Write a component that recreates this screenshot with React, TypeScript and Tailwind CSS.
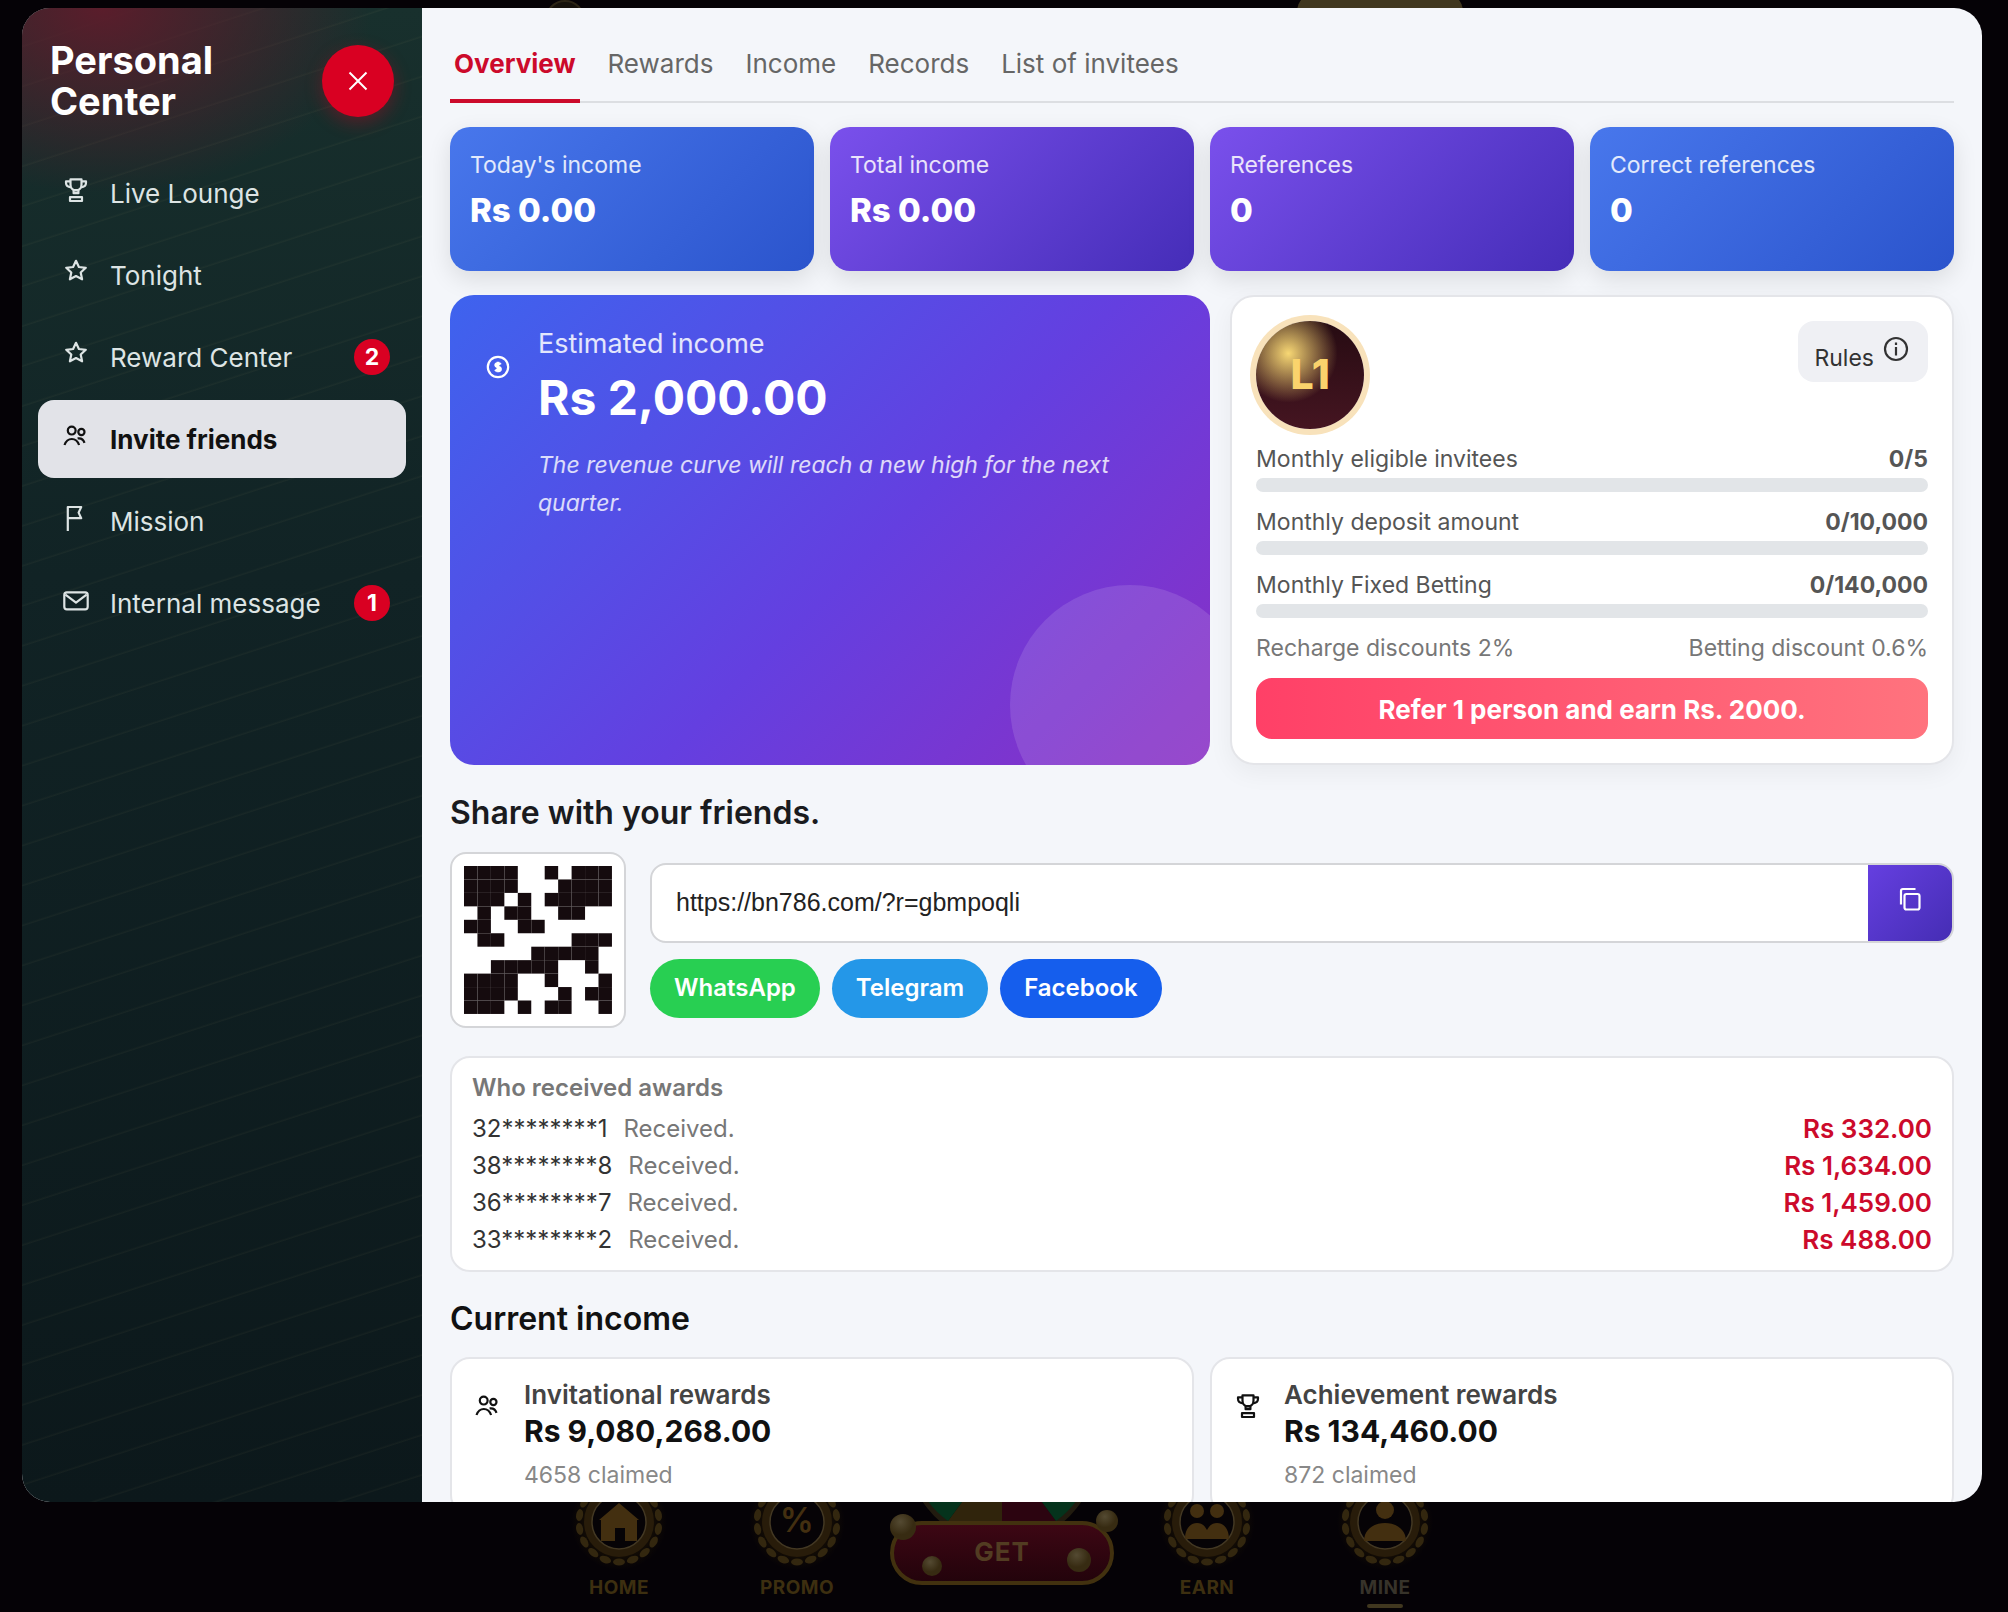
import type { ReactNode } from "react";
import clsx from "clsx";

const navItems = [
  { label: "Live Lounge", icon: "trophy" },
  { label: "Tonight", icon: "star" },
  { label: "Reward Center", icon: "star", badge: 2 },
  { label: "Invite friends", icon: "users", active: true },
  { label: "Mission", icon: "flag" },
  { label: "Internal message", icon: "mail", badge: 1 },
];

const tabs = ["Overview", "Rewards", "Income", "Records", "List of invitees"];

const stats = [
  { label: "Today's income", value: "Rs 0.00", tone: "blue" },
  { label: "Total income", value: "Rs 0.00", tone: "violet" },
  { label: "References", value: "0", tone: "violet" },
  { label: "Correct references", value: "0", tone: "blue" },
];

const goals = [
  { label: "Monthly eligible invitees", done: 0, total: 5 },
  { label: "Monthly deposit amount", done: 0, total: 10000 },
  { label: "Monthly Fixed Betting", done: 0, total: 140000 },
];

const awards = [
  { user: "32********1", amount: "Rs 332.00" },
  { user: "38********8", amount: "Rs 1,634.00" },
  { user: "36********7", amount: "Rs 1,459.00" },
  { user: "33********2", amount: "Rs 488.00" },
];

const income = [
  {
    title: "Invitational rewards",
    value: "Rs 9,080,268.00",
    claimed: "4658 claimed",
    icon: "users",
  },
  {
    title: "Achievement rewards",
    value: "Rs 134,460.00",
    claimed: "872 claimed",
    icon: "trophy",
  },
];

const qrRows = [
  "11110010111",
  "11110001111",
  "11101011111",
  "01011001100",
  "11001100000",
  "01100000111",
  "00000111110",
  "00111110010",
  "11110010001",
  "11110001011",
  "11101011001",
];

const iconShapes: Record<string, ReactNode> = {
  trophy: (
    <>
      <path d="M10.5 2.3h11v5.2c0 3.4-2.2 5.8-5.5 5.8s-5.5-2.4-5.5-5.8z" />
      <path d="M10.5 4.4H6v1.4c0 2.6 2 4.3 5 4.5M21.5 4.4H26v1.4c0 2.6-2 4.3-5 4.5" />
      <path d="M13.6 13.2h4.8v3h-4.8zM10 20.2h12v3.8H10z" />
    </>
  ),
  star: (
    <path d="M16 1.8l2.9 6.2 6.9.8-5.1 4.7 1.4 6.8-6.1-3.3-6.1 3.3 1.4-6.8-5.1-4.7 6.9-.8z" />
  ),
  users: (
    <>
      <circle cx="11.7" cy="7.6" r="3.9" />
      <circle cx="21.4" cy="9" r="3.1" />
      <path d="M4.5 22c1.4-4 3.9-6 7.3-6s5.9 2 7.3 6" />
      <path d="M17.6 15.4c3.4-.5 5.8 1 6.9 4.4" />
    </>
  ),
  flag: <path d="M7.8 26V2h13.4l-2.6 5.6 2.6 5.6H7.8" />,
  mail: (
    <>
      <rect x="4.3" y="5.3" width="23.4" height="17" rx="2.6" />
      <path d="M5.4 7.6L16 15.6l10.6-8" />
    </>
  ),
};

function Icon({ name }: { name: string }) {
  return (
    <svg
      viewBox="0 0 32 32"
      className="h-8 w-8 shrink-0"
      fill="none"
      stroke="currentColor"
      strokeWidth="2.2"
      strokeLinejoin="round"
      aria-hidden="true"
    >
      {iconShapes[name]}
    </svg>
  );
}

function Sidebar() {
  return (
    <aside className="w-[400px] shrink-0 bg-[radial-gradient(270px_185px_at_20%_0%,#5a1d2b_0%,#5a1d2b00_100%),repeating-linear-gradient(162deg,#ffe08c00_0px,#ffe08c00_35px,#ffe08c0a_37px,#ffe08c00_38px),linear-gradient(180deg,#18302d_0%,#112325_38%,#0c181b_100%)] px-4 pt-8">
      <div className="flex items-center justify-between px-3">
        <h1 className="w-[200px] text-[38px] leading-[41px] font-bold text-white">
          Personal Center
        </h1>
        <button
          aria-label="Close"
          className="flex h-[72px] w-[72px] items-center justify-center rounded-full bg-[#d90022] text-white shadow-[0_6px_18px_#d9002255]"
        >
          <svg
            viewBox="0 0 20 20"
            className="h-5 w-5"
            stroke="currentColor"
            strokeWidth="2"
            aria-hidden="true"
          >
            <path d="M1.5 1.5l17 17M18.5 1.5l-17 17" />
          </svg>
        </button>
      </div>

      <nav className="mt-8 flex flex-col gap-1">
        {navItems.map((item) => (
          <a
            key={item.label}
            href="#"
            className={clsx(
              "flex h-[78px] items-center rounded-2xl pr-4 pl-[22px] text-[26px]",
              item.active
                ? "bg-[#e2e3e8] font-bold text-[#111]"
                : "text-[#dde4e4]",
            )}
          >
            <Icon name={item.icon} />
            <span className="ml-[18px] pt-px">{item.label}</span>
            {item.badge && (
              <span className="ml-auto flex h-9 w-9 items-center justify-center rounded-full bg-[#d90022] text-[23px] font-bold text-white">
                {item.badge}
              </span>
            )}
          </a>
        ))}
      </nav>
    </aside>
  );
}

function Tabs() {
  return (
    <div
      role="tablist"
      className="flex h-[95px] shrink-0 items-end gap-6 border-b-2 border-[#dcdee2]"
    >
      {tabs.map((tab, i) => (
        <button
          key={tab}
          role="tab"
          aria-selected={i === 0}
          className={clsx(
            "-mb-0.5 border-b-4 px-1 pb-[15px] text-[26px] leading-10",
            i === 0
              ? "border-[#cc0a2b] font-bold text-[#cc0a2b]"
              : "border-transparent text-[#666]",
          )}
        >
          {tab}
        </button>
      ))}
    </div>
  );
}

function Stats() {
  return (
    <div className="mt-6 grid grid-cols-4 gap-4">
      {stats.map((stat) => (
        <div
          key={stat.label}
          className={clsx(
            "h-36 rounded-[20px] px-5 pt-5 text-white shadow-[0_8px_24px_#0000001c]",
            stat.tone === "blue"
              ? "bg-[linear-gradient(135deg,#4877ec,#2b54cc)]"
              : "bg-[linear-gradient(135deg,#7a50ec,#452db8)]",
          )}
        >
          <p className="text-[23px] leading-9 text-white/85">{stat.label}</p>
          <p className="mt-[7px] text-[33px] leading-10 font-extrabold">
            {stat.value}
          </p>
        </div>
      ))}
    </div>
  );
}

function EstimatedIncome() {
  return (
    <section className="relative flex overflow-hidden rounded-3xl bg-[linear-gradient(135deg,#3e63ee_0%,#643fe0_55%,#8a2fc4_100%)] px-8 pt-7 text-white">
      <svg
        viewBox="0 0 32 32"
        className="mt-7 h-8 w-8 shrink-0"
        fill="none"
        stroke="currentColor"
        strokeWidth="2.2"
        aria-hidden="true"
      >
        <circle cx="16" cy="16" r="10.2" />
        <path
          d="M18.4 13.6c-.4-.9-1.3-1.300-2.400-1.300-1.300 0-2.300.7-2.300 1.800 0 2.600 4.800 1.300 4.800 3.800 0 1.200-1.100 1.800-2.500 1.800-1.200 0-2.100-.5-2.600-1.300M16 10.800v10.400"
          strokeWidth="2.800"
        />
      </svg>
      <div className="ml-6 pt-px pr-16">
        <h2 className="text-[27px] leading-10 text-white/85">
          Estimated income
        </h2>
        <p className="mt-1.5 text-[48px] leading-[56px] font-bold">
          Rs 2,000.00
        </p>
        <p className="mt-5 text-[23px] leading-[38px] text-white/80 italic">
          The revenue curve will reach a new high for the next quarter.
        </p>
      </div>
      <div className="absolute -right-10 -bottom-[60px] h-60 w-60 rounded-full bg-white/12" />
    </section>
  );
}

function LevelCard() {
  return (
    <section className="flex flex-col gap-4 rounded-3xl border-2 border-[#e4e5e9] bg-white p-6 text-[23px] text-[#555] shadow-[0_8px_24px_#0000000d]">
      <div className="flex items-start justify-between">
        <div className="flex h-[108px] w-[108px] items-center justify-center rounded-full bg-[radial-gradient(circle_at_30%_30%,#f7d774_0%,#f7d77400_46%),linear-gradient(180deg,#260b12,#451521)] text-[41px] font-extrabold text-[#fad36c] shadow-[0_0_0_6px_#f8e2bb]">
          L1
        </div>
        <button className="flex h-[61px] items-start gap-1.5 rounded-2xl bg-[#eff0f4] px-4 text-[#333]">
          <span className="pt-3.5 leading-[46px]">Rules</span>
          <svg
            viewBox="0 0 32 32"
            className="mt-3 h-8 w-8"
            fill="none"
            stroke="currentColor"
            strokeWidth="2.2"
            aria-hidden="true"
          >
            <circle cx="16" cy="16" r="11" />
            <path d="M16 14v8.500M16 9.500v2.400" />
          </svg>
        </button>
      </div>

      {goals.map((goal) => (
        <div key={goal.label}>
          <div className="flex justify-between leading-7">
            <span>{goal.label}</span>
            <strong className="font-bold">
              {goal.done}/{goal.total.toLocaleString("en-US")}
            </strong>
          </div>
          <div className="mt-[5px] h-3.5 overflow-hidden rounded-full bg-[#e2e5e8]">
            <div
              className="h-full bg-[#ff4067]"
              style={{ width: `${(goal.done / goal.total) * 100}%` }}
            />
          </div>
        </div>
      ))}

      <div className="flex justify-between leading-7 text-[#777]">
        <span>Recharge discounts 2%</span>
        <span>Betting discount 0.6%</span>
      </div>
      <button className="h-[61px] rounded-2xl bg-[linear-gradient(90deg,#ff4067,#ff737e)] pt-0.5 text-[26px] font-bold text-white">
        Refer 1 person and earn Rs. 2000.
      </button>
    </section>
  );
}

function QrCode() {
  return (
    <div className="h-44 w-44 shrink-0 rounded-2xl border-2 border-[#d4d5d8] bg-white p-3">
      <svg viewBox="0 0 148 148" role="img" aria-label="Invite QR code">
        {qrRows.map((row, y) =>
          row
            .split("")
            .map((cell, x) =>
              cell === "1" ? (
                <rect
                  key={`${x}-${y}`}
                  x={x * 13.45}
                  y={y * 13.45}
                  width="13.45"
                  height="13.45"
                  fill="#150b0e"
                />
              ) : null,
            ),
        )}
      </svg>
    </div>
  );
}

function Share() {
  return (
    <section>
      <h2 className="mt-[25px] text-[32px] leading-[46px] font-semibold text-[#1a1b1e]">
        Share with your friends.
      </h2>
      <div className="mt-4 flex items-center gap-6">
        <QrCode />
        <div className="flex-1">
          <div className="flex h-20 overflow-hidden rounded-2xl border-2 border-[#d4d5d8] bg-white">
            <input
              readOnly
              aria-label="Invite link"
              value="https://bn786.com/?r=gbmpoqli"
              className="min-w-0 flex-1 px-6 font-['Liberation_Sans',Arial,sans-serif] text-[25px] text-[#222] outline-none"
            />
            <button
              aria-label="Copy link"
              className="flex w-[84px] justify-center bg-[linear-gradient(135deg,#653fe0,#452db4)] pt-[18px] text-white"
            >
              <svg
                viewBox="0 0 32 32"
                className="h-8 w-8"
                fill="none"
                stroke="currentColor"
                strokeWidth="2.2"
                aria-hidden="true"
              >
                <rect x="10.5" y="11" width="15" height="15.500" rx="2" />
                <path d="M7 21.500V8a2 2 0 0 1 2-2h12.500" />
              </svg>
            </button>
          </div>
          <div className="mt-4 flex gap-3 text-[24px] font-semibold text-white">
            <button className="h-[59px] rounded-full bg-[#28cf52] px-6">
              WhatsApp
            </button>
            <button className="h-[59px] rounded-full bg-[#2497e8] px-6">
              Telegram
            </button>
            <button className="h-[59px] rounded-full bg-[#155eed] px-6">
              Facebook
            </button>
          </div>
        </div>
      </div>
    </section>
  );
}

function Awards() {
  return (
    <section className="mt-7 rounded-[20px] border-2 border-[#e4e5e9] bg-white px-5 pt-3.5 pb-3">
      <h3 className="text-[24px] leading-8 font-semibold text-[#777]">
        Who received awards
      </h3>
      <ul className="mt-1.5 text-[24px] leading-[37px]">
        {awards.map((award) => (
          <li key={award.user} className="flex">
            <span className="text-[#333]">{award.user}</span>
            <span className="ml-4 text-[#777]">Received.</span>
            <strong className="ml-auto text-[26px] font-semibold text-[#cc0a2b]">
              {award.amount}
            </strong>
          </li>
        ))}
      </ul>
    </section>
  );
}

function CurrentIncome() {
  return (
    <section>
      <h2 className="mt-6 text-[32px] leading-[46px] font-semibold text-[#111]">
        Current income
      </h2>
      <div className="mt-[15px] grid grid-cols-2 gap-4">
        {income.map((item) => (
          <div
            key={item.title}
            className="flex rounded-[20px] border-2 border-[#e4e5e9] bg-white p-5 text-[#111]"
          >
            <div className="pt-3.5">
              <Icon name={item.icon} />
            </div>
            <div className="ml-5">
              <h3 className="text-[26px] leading-8 font-semibold text-[#444]">
                {item.title}
              </h3>
              <p className="text-[30px] leading-10 font-bold">{item.value}</p>
              <p className="mt-1.5 text-[23px] leading-9 text-[#888]">
                {item.claimed}
              </p>
            </div>
          </div>
        ))}
      </div>
    </section>
  );
}

function Medallion({ children }: { children: ReactNode }) {
  const leaves = Array.from({ length: 18 }, (_, i) => i * 20);

  return (
    <svg viewBox="0 0 96 96" className="h-24 w-24" aria-hidden="true">
      <defs>
        <radialGradient id="medal-glow">
          <stop offset="60%" stopColor="#1c1304" stopOpacity="0.8" />
          <stop offset="100%" stopColor="#1c1304" stopOpacity="0" />
        </radialGradient>
      </defs>
      <circle cx="48" cy="48" r="48" fill="url(#medal-glow)" />
      {leaves.map((angle) => (
        <ellipse
          key={angle}
          cx="48"
          cy="88"
          rx="6"
          ry="3.5"
          fill="#33270f"
          transform={`rotate(${angle} 48 48)`}
        />
      ))}
      <circle cx="48" cy="48" r="31" fill="#060306" stroke="#281c0a" strokeWidth="8" />
      <circle cx="48" cy="48" r="27" fill="none" stroke="#433823" strokeWidth="1.5" />
      <g fill="#432f10">{children}</g>
    </svg>
  );
}

function BottomItem({
  label,
  active,
  children,
}: {
  label: string;
  active?: boolean;
  children: ReactNode;
}) {
  return (
    <a
      href="#"
      className={clsx(
        "flex w-[178px] flex-col items-center text-[19px] leading-6 font-bold tracking-wide",
        active ? "text-[#37332a]" : "text-[#3d2f10]",
      )}
    >
      <Medallion>{children}</Medallion>
      <span className="mt-1.5">{label}</span>
      <span
        className={clsx(
          "mt-1 h-1 w-9 rounded-full",
          active && "bg-[#40371f]",
        )}
      />
    </a>
  );
}

function BottomNav() {
  return (
    <nav className="absolute inset-x-0 bottom-0 flex items-end justify-center pr-1 pb-1">
      <BottomItem label="HOME">
        <path d="M48 29l20 17h-2v21H54V54h-10v13H30V46h-2z" />
      </BottomItem>
      <BottomItem label="PROMO">
        <text x="48" y="58" textAnchor="middle" fontSize="34" fontWeight="600">
          %
        </text>
      </BottomItem>
      <a href="#" className="flex w-[232px] justify-center">
        <svg viewBox="0 0 232 160" className="h-40 w-[232px]" aria-hidden="true">
          <defs>
            <linearGradient id="get-fill" x1="0" y1="0" x2="0" y2="1">
              <stop offset="0%" stopColor="#3e0714" />
              <stop offset="100%" stopColor="#22030b" />
            </linearGradient>
            <radialGradient id="get-ball" cx="40%" cy="30%">
              <stop offset="0%" stopColor="#544a32" />
              <stop offset="100%" stopColor="#372b12" />
            </radialGradient>
          </defs>
          <circle cx="116" cy="0" r="93" fill="#08150e" stroke="#211b0f" strokeWidth="6" />
          <path d="M116 0L62 73a91 91 0 0 0 54 18z" fill="#30240c" />
          <path d="M116 0v91a91 91 0 0 0 54-18z" fill="#2c0410" />
          <path d="M116 0L29 28a91 91 0 0 0 33 45z" fill="#05331c" />
          <path d="M116 0l87 28a91 91 0 0 1-33 45z" fill="#05331c" />
          <rect x="6" y="75" width="220" height="60" rx="30" fill="url(#get-fill)" stroke="#42310f" strokeWidth="4" />
          <circle cx="17" cy="79" r="13" fill="url(#get-ball)" />
          <circle cx="46" cy="118" r="10" fill="url(#get-ball)" />
          <circle cx="221" cy="73" r="11" fill="url(#get-ball)" />
          <circle cx="193" cy="112" r="12" fill="url(#get-ball)" />
          <text x="116" y="113" textAnchor="middle" fontSize="26" fontWeight="700" letterSpacing="1" fill="#523c22">
            GET
          </text>
        </svg>
      </a>
      <BottomItem label="EARN">
        <circle cx="38" cy="37" r="7" />
        <circle cx="58" cy="37" r="7" />
        <path d="M26 65c0-10 5-16 12-16 5 0 8 3 10 7 2-4 5-7 10-7 7 0 12 6 12 16z" />
      </BottomItem>
      <BottomItem label="MINE" active>
        <circle cx="48" cy="36" r="9" />
        <path d="M27 67c0-11 9-18 21-18s21 7 21 18z" />
      </BottomItem>
    </nav>
  );
}

export default function App() {
  return (
    <div className="relative flex h-screen flex-col overflow-hidden bg-[#050206] font-[Inter,'Noto_Sans',sans-serif]">
      <div className="absolute inset-x-0 top-0 flex justify-center">
        <div className="flex w-[918px] justify-between">
          <div className="h-10 w-10 rounded-full border-2 border-[#2b2415] bg-[#15110b]" />
          <div className="-mt-2 h-10 w-[166px] rounded-3xl bg-[#40371f]" />
        </div>
      </div>
      <BottomNav />

      <div
        role="dialog"
        aria-label="Personal Center"
        className="relative mt-2 mr-[26px] mb-[110px] ml-[22px] flex min-h-0 flex-1 overflow-hidden rounded-[28px] bg-[#f4f6fa]"
      >
        <Sidebar />
        <main className="min-w-0 flex-1 overflow-hidden px-7">
          <Tabs />
          <Stats />
          <div className="mt-6 grid grid-cols-[1.05fr_1fr] gap-5">
            <EstimatedIncome />
            <LevelCard />
          </div>
          <Share />
          <Awards />
          <CurrentIncome />
        </main>
      </div>
    </div>
  );
}
